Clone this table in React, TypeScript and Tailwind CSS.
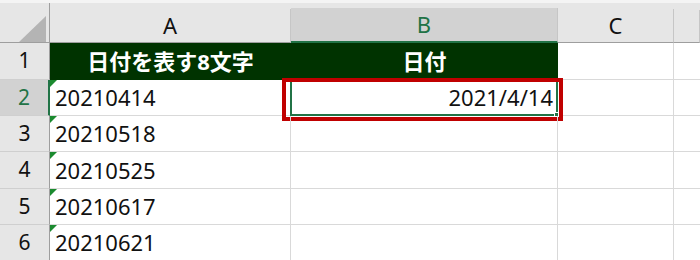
import React from "react";

const ROWS = [
  { n: 1, h: "h-[37px]" },
  { n: 2, h: "h-[36px]" },
  { n: 3, h: "h-[36px]" },
  { n: 4, h: "h-[37px]" },
  { n: 5, h: "h-[36px]" },
  { n: 6, h: "h-[36px]" },
];

const A_VALUES: Record<number, string> = {
  2: "20210414",
  3: "20210518",
  4: "20210525",
  5: "20210617",
  6: "20210621",
};

// little green "number stored as text" marker
const TextFlag = () => (
  <span className="absolute left-0 top-0 w-0 h-0 border-t-[7px] border-t-[#1b8a2f] border-r-[7px] border-r-transparent" />
);

const ColHead = ({ label, w, selected }: { label: string; w: string; selected?: boolean }) => (
  <div className={`${w} shrink-0 flex flex-col`}>
    <div className="h-[7px]" />
    <div
      className={`flex-1 flex items-center justify-center border-r border-[#c6c6c6] ${
        selected ? "bg-[#d2d2d2] text-[#217346] border-b-2 border-b-[#217346]" : "border-b border-b-[#9e9e9e]"
      }`}
    >
      {label}
    </div>
  </div>
);

export default function App() {
  return (
    <div
      className="w-[700px] h-[260px] overflow-hidden bg-white text-[#111]"
      style={{ fontFamily: '"Noto Sans", "Noto Sans CJK JP", sans-serif' }}
    >
      <div className="h-[3px] bg-[#f4f4f4]" />

      {/* column headers */}
      <div className="flex h-[40px] bg-[#e6e6e6] text-[22px]">
        <div className="w-[50px] shrink-0 relative border-r border-[#9e9e9e] border-b border-b-[#9e9e9e]">
          <svg className="absolute left-[19px] top-[13px]" width="27" height="26" viewBox="0 0 27 26">
            <polygon points="0,26 27,26 27,0" fill="#b4b4b4" />
          </svg>
        </div>
        <ColHead label="A" w="w-[241px]" />
        <ColHead label="B" w="w-[267px]" selected />
        <ColHead label="C" w="w-[116px]" />
        <ColHead label="" w="flex-1" />
      </div>

      {ROWS.map((r) => (
        <div key={r.n} className={`flex ${r.h}`}>
          <div
            className={`w-[50px] shrink-0 flex items-center justify-center text-[21px] border-b border-[#cfcfcf] ${
              r.n === 2
                ? "bg-[#d2d2d2] text-[#217346] border-r-2 border-r-[#217346]"
                : "bg-[#e6e6e6] border-r border-r-[#9e9e9e]"
            }`}
          >
            {r.n}
          </div>

          {r.n === 1 ? (
            <>
              <div className="w-[241px] shrink-0 bg-[#003300] text-white font-bold text-[22px] flex items-center justify-center">
                日付を表す8文字
              </div>
              <div className="w-[267px] shrink-0 bg-[#003300] text-white font-bold text-[22px] flex items-center justify-center">
                日付
              </div>
            </>
          ) : (
            <>
              <div className="w-[241px] shrink-0 relative border-r border-b border-[#d9d9d9] flex items-center pl-[5px] text-[22px]">
                <TextFlag />
                {A_VALUES[r.n]}
              </div>
              <div className="w-[267px] shrink-0 relative border-r border-b border-[#d9d9d9] flex items-center justify-end pr-[4px] text-[22px]">
                {r.n === 2 && (
                  <>
                    2021/4/14
                    <span className="absolute -left-[1px] -top-[1px] -right-[1px] -bottom-[1px] border-2 border-[#217346]" />
                    <span className="absolute -right-[2px] -bottom-[2px] w-[5px] h-[5px] bg-[#217346] border border-white" />
                    <span className="absolute -left-[9px] -top-[2px] -right-[6px] -bottom-[6px] border-4 border-[#c00000]" />
                  </>
                )}
              </div>
            </>
          )}

          <div className="w-[116px] shrink-0 border-r border-b border-[#d9d9d9]" />
          <div className="flex-1 border-b border-[#d9d9d9]" />
        </div>
      ))}
    </div>
  );
}
